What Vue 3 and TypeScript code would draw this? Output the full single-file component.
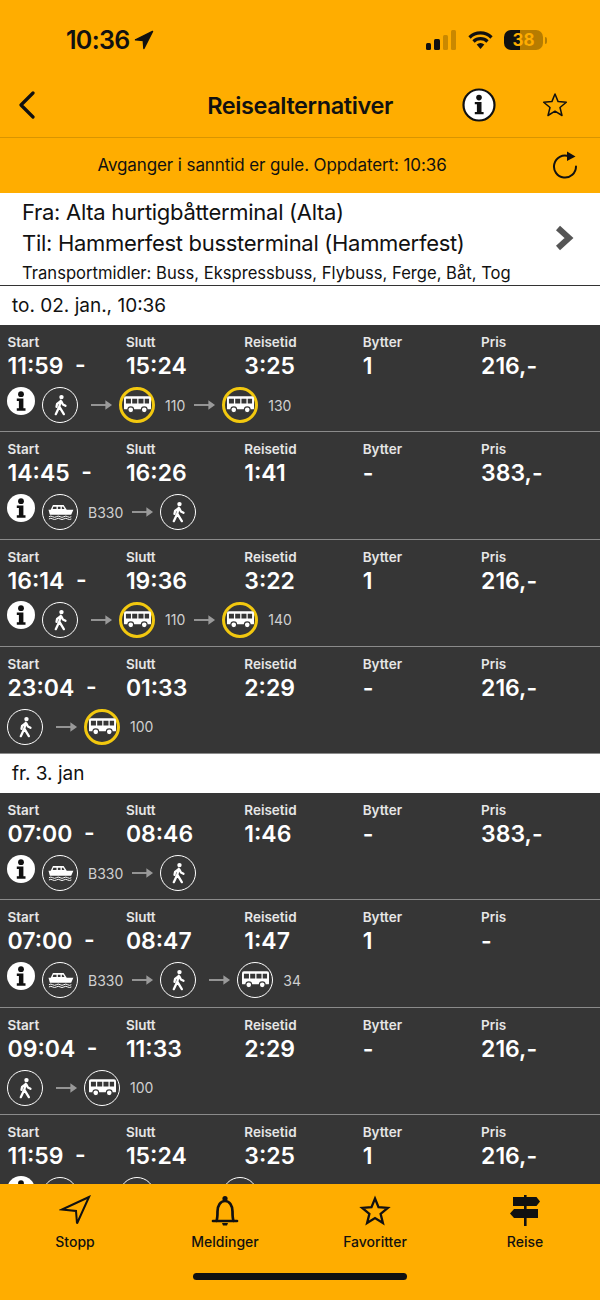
<script setup lang="ts">
type Leg = { kind: 'walk' | 'bus' | 'ferry'; line?: string; live?: boolean };
type Trip = { start: string; end: string; dur: string; changes: string; price: string; info: boolean; legs: Leg[] };

const walk: Leg = { kind: 'walk' };
const bus = (line: string, live = false): Leg => ({ kind: 'bus', line, live });
const ferry: Leg = { kind: 'ferry', line: 'B330' };

const groups: { date: string; trips: Trip[] }[] = [
  {
    date: 'to. 02. jan., 10:36',
    trips: [
      { start: '11:59', end: '15:24', dur: '3:25', changes: '1', price: '216,-', info: true, legs: [walk, bus('110', true), bus('130', true)] },
      { start: '14:45', end: '16:26', dur: '1:41', changes: '-', price: '383,-', info: true, legs: [ferry, walk] },
      { start: '16:14', end: '19:36', dur: '3:22', changes: '1', price: '216,-', info: true, legs: [walk, bus('110', true), bus('140', true)] },
      { start: '23:04', end: '01:33', dur: '2:29', changes: '-', price: '216,-', info: false, legs: [walk, bus('100', true)] },
    ],
  },
  {
    date: 'fr. 3. jan',
    trips: [
      { start: '07:00', end: '08:46', dur: '1:46', changes: '-', price: '383,-', info: true, legs: [ferry, walk] },
      { start: '07:00', end: '08:47', dur: '1:47', changes: '1', price: '-', info: true, legs: [ferry, walk, bus('34')] },
      { start: '09:04', end: '11:33', dur: '2:29', changes: '-', price: '216,-', info: false, legs: [walk, bus('100')] },
      { start: '11:59', end: '15:24', dur: '3:25', changes: '1', price: '216,-', info: true, legs: [walk, bus('110'), bus('130')] },
    ],
  },
];
</script>

<template>
  <div class="screen">
    <svg class="sprites" aria-hidden="true">
      <symbol id="walk" viewBox="0 0 24 24">
        <circle cx="13.6" cy="3.4" r="2.4" fill="#fff" />
        <path d="M12.8 7.400 11.200 14l-3.800 8M11.400 14l4.800 8M12.400 8 8.800 10.800l-.6 3.200M13.400 8l1.800 3.400 2.800 1.400" fill="none" stroke="#fff" stroke-width="2.500" stroke-linecap="round" stroke-linejoin="round" />
      </symbol>
      <symbol id="bus" viewBox="0 0 28 18">
        <path d="M2 0h24a2 2 0 0 1 2 2v10.500a1 1 0 0 1-1 1H1a1 1 0 0 1-1-1V2a2 2 0 0 1 2-2z" fill="#fff" />
        <path d="M2 2.500h5.200v5H2zM8.500 2.500h5.200v5H8.500zM15 2.500h5.200v5H15zM21.500 2.500H26v5h-4.500z" fill="#363636" />
        <circle cx="7" cy="14" r="3" fill="#fff" stroke="#363636" stroke-width="1.200" />
        <circle cx="21" cy="14" r="3" fill="#fff" stroke="#363636" stroke-width="1.200" />
      </symbol>
      <symbol id="ferry" viewBox="0 0 30 18">
        <path d="M6.500 1h12l3.500 5.500h7.500l-2.500 5.500H3L1.500 6.500H4z" fill="#fff" />
        <path d="M7 3h3.500v2.500H6.200zM12 3h3v2.500h-3zM16.500 3h1.500l1.500 2.500h-3z" fill="#363636" />
        <path d="M2 14.300q2.100-1.400 4.200 0t4.200 0 4.200 0 4.200 0 4.200 0 4.200 0M2 16.800q2.100-1.400 4.200 0t4.200 0 4.200 0 4.200 0 4.200 0 4.200 0" fill="none" stroke="#fff" stroke-width="1.100" />
      </symbol>
      <symbol id="info" viewBox="0 0 28 28">
        <circle cx="14" cy="14" r="14" fill="#fff" />
        <circle cx="14" cy="7.200" r="2.900" fill="#111" />
        <path d="M9.800 11.600h6.600v9.700h2.100v2.400H9.800v-2.400h2.100v-7.300H9.800z" fill="#111" />
      </symbol>
    </svg>

    <header class="top">
      <div class="status">
        <div class="clock">
          <span>10:36</span>
          <svg class="loc" viewBox="0 0 20 20"><path d="M18.500 1.500 1.500 9.800l7.800.6.600 8.100z" fill="#111" stroke="#111" stroke-width="1.500" stroke-linejoin="round" /></svg>
        </div>
        <div class="indicators">
          <div class="signal">
            <i class="on s1"></i><i class="on s2"></i><i class="s3"></i><i class="s4"></i>
          </div>
          <svg class="wifi" viewBox="0 0 26 20">
            <path d="M2 7.500a15.500 15.500 0 0 1 22 0M6 11.500a10 10 0 0 1 14 0" fill="none" stroke="#111" stroke-width="3.200" />
            <path d="M9.200 14.500a5.400 5.400 0 0 1 7.600 0L13 19z" fill="#111" />
          </svg>
          <div class="battery"><span>38</span></div>
          <div class="battery-cap"></div>
        </div>
      </div>

      <nav class="nav">
        <svg class="back" viewBox="0 0 18 28"><path d="M15 2 3 14l12 12" fill="none" stroke="#111" stroke-width="3.200" stroke-linecap="round" stroke-linejoin="round" /></svg>
        <h1 class="title">Reisealternativer</h1>
        <div class="nav-actions">
          <svg class="nav-info" viewBox="0 0 34 34">
            <circle cx="17" cy="17" r="15.500" fill="#fff" stroke="#111" stroke-width="2.200" />
            <circle cx="17" cy="9.600" r="2.800" fill="#111" />
            <path d="M12.800 14h6.700v10h2.100v2.300h-8.800V24h2.100v-7.700h-2.100z" fill="#111" />
          </svg>
          <svg class="nav-star" viewBox="0 0 26 26"><path d="m13 2 3.100 7.600 8.200.6-6.300 5.300 2 8-7-4.300-7 4.300 2-8-6.300-5.300 8.200-.6z" fill="none" stroke="#111" stroke-width="1.500" stroke-linejoin="round" /></svg>
        </div>
      </nav>

      <div class="realtime">
        <span>Avganger i sanntid er gule. Oppdatert: 10:36</span>
        <svg class="reload" viewBox="0 0 26 28">
          <path d="M16.800 5.200A11 11 0 1 0 24 15.500" fill="none" stroke="#111" stroke-width="2" stroke-linecap="round" />
          <path d="m15 .5 8.500 5-8.500 4.500z" fill="#111" />
        </svg>
      </div>
    </header>

    <section class="route">
      <div class="route-text">
        <p class="place">Fra: Alta hurtigbåtterminal (Alta)</p>
        <p class="place">Til: Hammerfest bussterminal (Hammerfest)</p>
        <p class="modes">Transportmidler: Buss, Ekspressbuss, Flybuss, Ferge, Båt, Tog</p>
      </div>
      <svg class="more" viewBox="0 0 20 26"><path d="m4 3 11 10L4 23" fill="none" stroke="#555" stroke-width="6" /></svg>
    </section>

    <main class="list">
      <template v-for="group in groups" :key="group.date">
        <div class="date">{{ group.date }}</div>
        <article v-for="(trip, i) in group.trips" :key="i" class="trip">
          <div class="cols">
            <div class="col"><span class="lbl">Start</span><b class="val">{{ trip.start }}&nbsp; -</b></div>
            <div class="col"><span class="lbl">Slutt</span><b class="val">{{ trip.end }}</b></div>
            <div class="col"><span class="lbl">Reisetid</span><b class="val">{{ trip.dur }}</b></div>
            <div class="col"><span class="lbl">Bytter</span><b class="val">{{ trip.changes }}</b></div>
            <div class="col"><span class="lbl">Pris</span><b class="val">{{ trip.price }}</b></div>
          </div>
          <div class="legs">
            <svg v-if="trip.info" class="info"><use href="#info" /></svg>
            <template v-for="(leg, n) in trip.legs" :key="n">
              <svg v-if="n > 0" class="arrow" viewBox="0 0 23 12">
                <path d="M0 6h20" stroke="#9a9a9a" stroke-width="2" />
                <path d="m15 1 7 5-7 5z" fill="#9a9a9a" />
              </svg>
              <span class="badge" :class="{ live: leg.live }">
                <svg :class="'glyph-' + leg.kind"><use :href="'#' + leg.kind" /></svg>
              </span>
              <span v-if="leg.line" class="line">{{ leg.line }}</span>
            </template>
          </div>
        </article>
      </template>
    </main>

    <footer class="tabs">
      <div class="tabrow">
        <div class="tab">
          <svg viewBox="0 0 32 32"><path d="M30 2 3 14.500l14 1.500 1 12.500z" fill="none" stroke="#111" stroke-width="2" stroke-linejoin="miter" /></svg>
          <span>Stopp</span>
        </div>
        <div class="tab">
          <svg viewBox="0 0 32 32">
            <path d="M4 26h24M7.300 26c1.200-1.800 1.200-4 1.200-9.500C8.500 10.500 11.500 6 16 6s7.500 4.500 7.500 10.500c0 5.500 0 7.700 1.200 9.500" fill="none" stroke="#111" stroke-width="2.700" stroke-linecap="round" />
            <circle cx="16" cy="3.500" r="2.600" fill="#111" />
            <path d="M13 28h6l-1 2.500h-4z" fill="#111" />
          </svg>
          <span>Meldinger</span>
        </div>
        <div class="tab">
          <svg viewBox="0 0 32 32"><path d="m16 3.500 3.500 8.700 9.300.7-7.200 6 2.300 9.100-7.900-4.900-7.900 4.900 2.300-9.100-7.200-6 9.300-.7z" fill="none" stroke="#111" stroke-width="2.300" stroke-linejoin="miter" /></svg>
          <span>Favoritter</span>
        </div>
        <div class="tab">
          <svg viewBox="0 0 32 32">
            <path d="M15 0h2.600v31H15z" fill="#111" />
            <path d="M4 2h23.500l3.500 4.500-3.500 4.500H4z" fill="#111" />
            <path d="M29 14v9H5l-4-4.500L5 14z" fill="#111" />
          </svg>
          <span>Reise</span>
        </div>
      </div>
      <div class="home"></div>
    </footer>
  </div>
</template>

<style>
html,
body {
  margin: 0;
  background: #fff;
}
</style>

<style scoped>
.screen {
  width: 600px;
  height: 1300px;
  display: flex;
  flex-direction: column;
  overflow: hidden;
  font-family: Inter, "Liberation Sans", sans-serif;
  color: #111;
  background: #fff;
}

.sprites {
  display: none;
}

.top {
  background: #ffad00;
  flex: none;
}

.status {
  height: 76px;
  box-sizing: border-box;
  padding: 4px 53px 0 66px;
  display: flex;
  align-items: center;
  justify-content: space-between;
}

.clock {
  display: flex;
  align-items: center;
  gap: 5px;
  font-size: 25px;
  font-weight: 600;
  letter-spacing: -0.7px;
}

.loc {
  width: 20px;
  height: 20px;
}

.indicators {
  display: flex;
  align-items: center;
}

.signal {
  display: flex;
  align-items: flex-end;
  gap: 3px;
  height: 20px;
  margin-right: 11px;
}

.signal i {
  width: 5.250px;
  border-radius: 1.500px;
  background: #c98800;
}

.signal .on {
  background: #111;
}

.s1 { height: 7px; }
.s2 { height: 11px; }
.s3 { height: 15px; }
.s4 { height: 20px; }

.wifi {
  width: 27px;
  height: 20px;
  margin-right: 10px;
}

.battery {
  width: 39px;
  height: 20px;
  border-radius: 7px;
  background: linear-gradient(90deg, #111 41%, #b67c00 41%);
  display: flex;
  align-items: center;
  justify-content: center;
  font-size: 17px;
  font-weight: 700;
  color: #ffad00;
}

.battery-cap {
  width: 2px;
  height: 7px;
  margin-left: 2px;
  border-radius: 0 2px 2px 0;
  background: #b67c00;
}

.nav {
  height: 62px;
  box-sizing: border-box;
  display: grid;
  grid-template-columns: 1fr auto 1fr;
  align-items: center;
  border-bottom: 1px solid #d99500;
  padding-bottom: 3px;
}

.back {
  width: 18px;
  height: 28px;
  margin-left: 18px;
}

.title {
  margin: 0;
  font-size: 23.500px;
  font-weight: 600;
  letter-spacing: -0.4px;
}

.nav-actions {
  display: flex;
  justify-content: flex-end;
  align-items: center;
  gap: 46px;
  padding-right: 32px;
}

.nav-info {
  width: 34px;
  height: 34px;
}

.nav-star {
  width: 26px;
  height: 26px;
}

.realtime {
  height: 55px;
  box-sizing: border-box;
  padding: 0 56px 2px 0;
  display: flex;
  align-items: center;
  justify-content: center;
  position: relative;
  font-size: 17px;
  letter-spacing: -0.1px;
}

.reload {
  position: absolute;
  right: 22px;
  top: 13px;
  width: 26px;
  height: 28px;
}

.route {
  flex: none;
  display: flex;
  align-items: center;
  justify-content: space-between;
  padding: 3px 26px 0 22px;
  height: 93px;
  box-sizing: border-box;
  border-bottom: 1px solid #333;
}

.place {
  margin: 0 0 7px;
  font-size: 22px;
  line-height: 24px;
  letter-spacing: -0.3px;
}

.place + .place {
  margin-bottom: 9px;
}

.modes {
  margin: 0;
  font-size: 16.600px;
  line-height: 18px;
}

.more {
  width: 20px;
  height: 26px;
  margin-top: -6px;
}

.list {
  flex: 1;
  min-height: 0;
  overflow: hidden;
}

.date {
  height: 39px;
  box-sizing: border-box;
  padding-left: 12px;
  display: flex;
  align-items: center;
  font-size: 19px;
}

.trip {
  height: 107.250px;
  box-sizing: border-box;
  padding: 9px 0 0 7.500px;
  background: #363636;
  border-bottom: 1px solid #8b8b8b;
  color: #fff;
}

.cols {
  display: grid;
  grid-template-columns: repeat(5, 118.400px);
}

.col {
  display: flex;
  flex-direction: column;
}

.lbl {
  font-size: 13.500px;
  font-weight: 600;
  line-height: 16px;
  color: #e6e6e6;
}

.val {
  margin-top: 2px;
  font-size: 23px;
  font-weight: 600;
  line-height: 28px;
}

.legs {
  display: flex;
  align-items: center;
  height: 38px;
  margin-top: 6px;
  margin-left: -0.500px;
  font-size: 14px;
  color: #d0d0d0;
}

.info {
  width: 28px;
  height: 28px;
  margin: -9px 7px 0 0;
  flex: none;
}

.arrow {
  width: 22px;
  height: 12px;
  margin: 0 6px 0 13px;
  flex: none;
}

.line + .arrow {
  margin-left: 9px;
}

.badge {
  width: 36px;
  height: 36px;
  box-sizing: border-box;
  border: 1.500px solid #fff;
  border-radius: 50%;
  display: flex;
  align-items: center;
  justify-content: center;
  flex: none;
}

.badge.live {
  border: 3px solid #f2c80f;
}

.glyph-walk {
  width: 22px;
  height: 22px;
}

.glyph-bus {
  width: 27px;
  height: 18px;
}

.glyph-ferry {
  width: 27px;
  height: 16px;
}

.line {
  margin-left: 10px;
}

.tabs {
  flex: none;
  height: 116px;
  background: #ffad00;
  display: flex;
  flex-direction: column;
  align-items: center;
}

.tabrow {
  width: 100%;
  display: grid;
  grid-template-columns: repeat(4, 1fr);
  padding-top: 11px;
}

.tab {
  display: flex;
  flex-direction: column;
  align-items: center;
  font-size: 14px;
  font-weight: 500;
}

.tab svg {
  width: 32px;
  height: 32px;
}

.tab span {
  margin-top: 6px;
  line-height: 18px;
}

.home {
  width: 214px;
  height: 7px;
  margin-top: 22px;
  border-radius: 4px;
  background: #111;
}
</style>
